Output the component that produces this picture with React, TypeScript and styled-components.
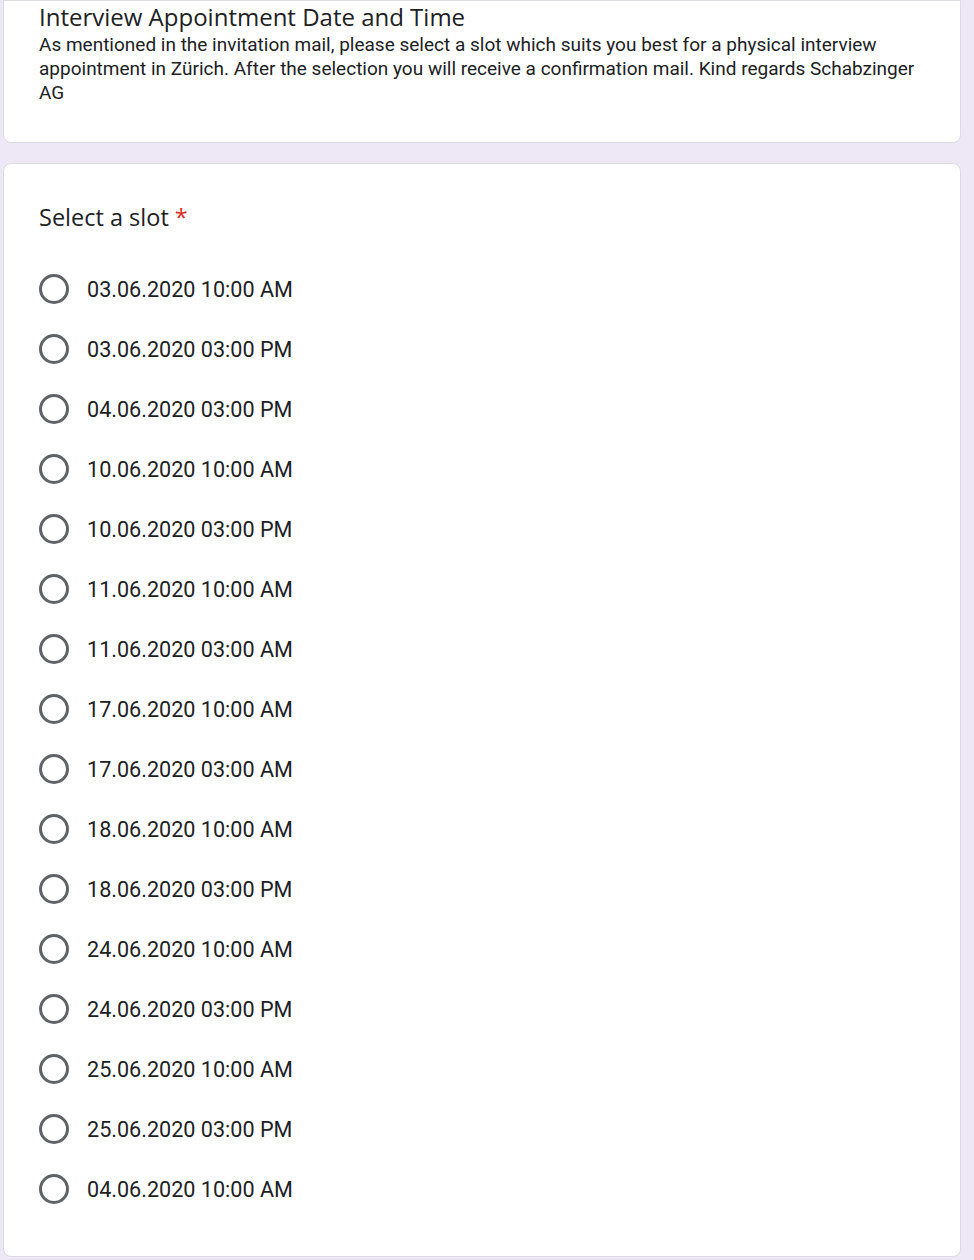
import styled, { createGlobalStyle } from "styled-components";

const slots = [
  "03.06.2020 10:00 AM",
  "03.06.2020 03:00 PM",
  "04.06.2020 03:00 PM",
  "10.06.2020 10:00 AM",
  "10.06.2020 03:00 PM",
  "11.06.2020 10:00 AM",
  "11.06.2020 03:00 AM",
  "17.06.2020 10:00 AM",
  "17.06.2020 03:00 AM",
  "18.06.2020 10:00 AM",
  "18.06.2020 03:00 PM",
  "24.06.2020 10:00 AM",
  "24.06.2020 03:00 PM",
  "25.06.2020 10:00 AM",
  "25.06.2020 03:00 PM",
  "04.06.2020 10:00 AM",
];

export default function App() {
  return (
    <Page>
      <GlobalStyle />
      <HeaderCard>
        <Title>Interview Appointment Date and Time</Title>
        <Description>
          As mentioned in the invitation mail, please select a slot which suits
          you best for a physical interview appointment in Zürich. After the
          selection you will receive a confirmation mail. Kind regards
          Schabzinger AG
        </Description>
      </HeaderCard>
      <QuestionCard>
        <Question>
          Select a slot <Required>*</Required>
        </Question>
        <Options>
          {slots.map((slot, i) => (
            <Option key={i}>
              <Radio />
              <OptionLabel>{slot}</OptionLabel>
            </Option>
          ))}
        </Options>
      </QuestionCard>
    </Page>
  );
}

const GlobalStyle = createGlobalStyle`
  html, body {
    margin: 0;
    padding: 0;
    background: #ede7f6;
  }
  body {
    font-family: Roboto, "Liberation Sans", sans-serif;
    color: #202124;
  }
`;

const Page = styled.div`
  display: flex;
  flex-direction: column;
  gap: 20px;
  width: 958px;
  margin-left: 3px;
  height: 1260px;
  overflow: hidden;
`;

const Card = styled.div`
  background: #fff;
  border: 1px solid #dadce0;
  border-radius: 8px;
  box-sizing: border-box;
`;

const HeaderCard = styled(Card)`
  border-top-left-radius: 0;
  border-top-right-radius: 0;
  padding: 0 35px 37px;
  height: 143px;
`;

const Title = styled.div`
  font-family: "Open Sans", sans-serif;
  font-size: 24px;
  line-height: 31px;
  color: #202124;
`;

const Description = styled.div`
  font-size: 19px;
  line-height: 24px;
  color: #202124;
  margin-top: 1px;
`;

const QuestionCard = styled(Card)`
  padding: 37px 35px 37px;
  flex-shrink: 0;
`;

const Question = styled.div`
  font-family: "Open Sans", sans-serif;
  font-size: 23.5px;
  line-height: 32px;
  color: #202124;
`;

const Required = styled.span`
  color: #d93025;
`;

const Options = styled.div`
  display: flex;
  flex-direction: column;
  margin-top: 26px;
`;

const Option = styled.div`
  display: flex;
  align-items: center;
  height: 60px;
  gap: 18px;
`;

const Radio = styled.span`
  width: 30px;
  height: 30px;
  box-sizing: border-box;
  border: 3px solid #5f6368;
  border-radius: 50%;
  flex-shrink: 0;
`;

const OptionLabel = styled.span`
  font-size: 21.6px;
  color: #202124;
`;
